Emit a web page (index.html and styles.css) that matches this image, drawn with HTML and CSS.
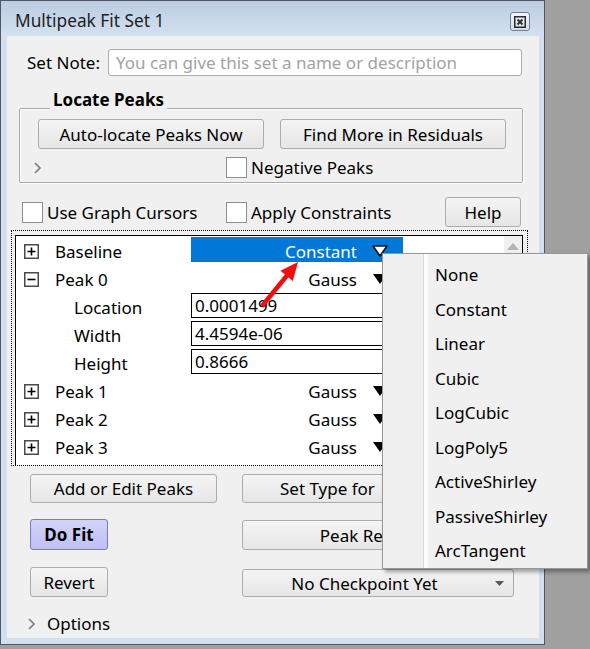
FILE: index.html
```html
<!DOCTYPE html>
<html>
<head>
<meta charset="utf-8">
<title>Multipeak Fit Set 1</title>
<link rel="stylesheet" href="styles.css">
</head>
<body>
<div class="window">
  <div class="titlebar">
    <span class="title">Multipeak Fit Set 1</span>
    <button class="close" aria-label="Close">
      <svg width="12" height="12" viewBox="0 0 12 12"><rect x="0.75" y="0.75" width="10.5" height="10.5" fill="none" stroke="#2a2a2a" stroke-width="1.5"/><path d="M3.5 3.5 L8.5 8.5 M8.5 3.5 L3.5 8.5" stroke="#2a2a2a" stroke-width="1.8"/></svg>
    </button>
  </div>
  <div class="content">
    <div class="note-row">
      <span class="note-label">Set Note:</span>
      <div class="note-input">You can give this set a name or description</div>
    </div>

    <div class="group">
      <div class="group-title">Locate Peaks</div>
      <div class="group-buttons">
        <button class="btn btn-locate">Auto-locate Peaks Now</button>
        <button class="btn btn-locate">Find More in Residuals</button>
      </div>
      <div class="group-row2">
        <svg class="chev" width="9" height="12" viewBox="0 0 9 12"><polyline points="2,1 7,6 2,11" fill="none" stroke="#7a7a7a" stroke-width="1.6"/></svg>
        <span class="check neg"><span class="box"></span>Negative Peaks</span>
      </div>
    </div>

    <div class="opts-row">
      <span class="check first"><span class="box"></span>Use Graph Cursors</span>
      <span class="check"><span class="box"></span>Apply Constraints</span>
      <button class="btn help">Help</button>
    </div>

    <div class="tree-focus">
      <div class="tree">
        <div class="tree-rows">
          <div class="row">
            <div class="name"><svg class="tog" width="15" height="15" viewBox="0 0 15 15"><rect x="0.75" y="0.75" width="13.5" height="13.5" fill="#fff" stroke="#4a4a4a" stroke-width="1.5"/><path d="M3.5 7.5 H11.5 M7.5 3.5 V11.5" stroke="#000" stroke-width="1.6"/></svg>Baseline</div>
            <div class="val sel">Constant<svg class="tri" width="16" height="12" viewBox="0 0 16 12"><polygon points="1,1 15,1 8,11" fill="#fff" stroke="#111" stroke-width="1.6" stroke-linejoin="round"/></svg></div>
          </div>
          <div class="row">
            <div class="name"><svg class="tog" width="15" height="15" viewBox="0 0 15 15"><rect x="0.75" y="0.75" width="13.5" height="13.5" fill="#fff" stroke="#4a4a4a" stroke-width="1.5"/><path d="M3.5 7.5 H11.5" stroke="#000" stroke-width="1.6"/></svg>Peak 0</div>
            <div class="val">Gauss<svg class="tri" width="16" height="12" viewBox="0 0 16 12"><polygon points="1,1 15,1 8,11" fill="#000"/></svg></div>
          </div>
          <div class="row child">
            <div class="name">Location</div>
            <div class="field">0.0001499</div>
          </div>
          <div class="row child">
            <div class="name">Width</div>
            <div class="field">4.4594e-06</div>
          </div>
          <div class="row child">
            <div class="name">Height</div>
            <div class="field">0.8666</div>
          </div>
          <div class="row">
            <div class="name"><svg class="tog" width="15" height="15" viewBox="0 0 15 15"><rect x="0.75" y="0.75" width="13.5" height="13.5" fill="#fff" stroke="#4a4a4a" stroke-width="1.5"/><path d="M3.5 7.5 H11.5 M7.5 3.5 V11.5" stroke="#000" stroke-width="1.6"/></svg>Peak 1</div>
            <div class="val">Gauss<svg class="tri" width="16" height="12" viewBox="0 0 16 12"><polygon points="1,1 15,1 8,11" fill="#000"/></svg></div>
          </div>
          <div class="row">
            <div class="name"><svg class="tog" width="15" height="15" viewBox="0 0 15 15"><rect x="0.75" y="0.75" width="13.5" height="13.5" fill="#fff" stroke="#4a4a4a" stroke-width="1.5"/><path d="M3.5 7.5 H11.5 M7.5 3.5 V11.5" stroke="#000" stroke-width="1.6"/></svg>Peak 2</div>
            <div class="val">Gauss<svg class="tri" width="16" height="12" viewBox="0 0 16 12"><polygon points="1,1 15,1 8,11" fill="#000"/></svg></div>
          </div>
          <div class="row">
            <div class="name"><svg class="tog" width="15" height="15" viewBox="0 0 15 15"><rect x="0.75" y="0.75" width="13.5" height="13.5" fill="#fff" stroke="#4a4a4a" stroke-width="1.5"/><path d="M3.5 7.5 H11.5 M7.5 3.5 V11.5" stroke="#000" stroke-width="1.6"/></svg>Peak 3</div>
            <div class="val">Gauss<svg class="tri" width="16" height="12" viewBox="0 0 16 12"><polygon points="1,1 15,1 8,11" fill="#000"/></svg></div>
          </div>
        </div>
        <div class="scrollbar">
          <svg width="12" height="7" viewBox="0 0 12 7"><polygon points="0,7 6,0 12,7" fill="#b4b4b4"/></svg>
        </div>
      </div>
    </div>

    <div class="actions">
      <button class="btn">Add or Edit Peaks</button>
      <button class="btn settype">Set Type for</button>
      <button class="btn small dofit">Do Fit</button>
      <button class="btn end results">Peak Results</button>
      <button class="btn small end">Revert</button>
      <button class="btn popup"><span class="popup-text">No Checkpoint Yet</span><svg width="9" height="5" viewBox="0 0 9 5"><polygon points="0,0 9,0 4.5,5" fill="#5a5a5a"/></svg></button>
    </div>

    <div class="options-row">
      <svg class="chev" width="9" height="12" viewBox="0 0 9 12"><polyline points="2,1 7,6 2,11" fill="none" stroke="#7a7a7a" stroke-width="1.6"/></svg>
      <span>Options</span>
    </div>
  </div>
</div>

<svg class="arrow" width="55" height="60" viewBox="0 0 55 60">
  <line x1="12" y1="51" x2="37" y2="20.5" stroke="#f20d0d" stroke-width="4.5"/>
  <polygon points="48,7 42.8,26 30.4,15.8" fill="#f20d0d"/>
</svg>

<div class="menu">
  <div class="menu-item">None</div>
  <div class="menu-item">Constant</div>
  <div class="menu-item">Linear</div>
  <div class="menu-item">Cubic</div>
  <div class="menu-item">LogCubic</div>
  <div class="menu-item">LogPoly5</div>
  <div class="menu-item">ActiveShirley</div>
  <div class="menu-item">PassiveShirley</div>
  <div class="menu-item">ArcTangent</div>
</div>
</body>
</html>
```

FILE: styles.css
```css
* { box-sizing: border-box; }

html, body { margin: 0; padding: 0; }

body {
  position: relative;
  width: 590px;
  height: 649px;
  overflow: hidden;
  background: #a0a0a0;
  font-family: "Noto Sans", "Open Sans", sans-serif;
  font-size: 17px;
  color: #000;
}

.window {
  width: 545px;
  height: 645px;
  border: 1px solid #4e5866;
  background: #d2dfee;
  display: flex;
  flex-direction: column;
}

.titlebar {
  flex: none;
  height: 35px;
  display: flex;
  align-items: flex-start;
  justify-content: space-between;
  padding: 10px 14px 0 14px;
  background: linear-gradient(#bccde2, #d3e0ef);
}

.title {
  font-size: 17.3px;
  line-height: 20px;
  color: #1e1e1e;
}

.close {
  width: 20px;
  height: 19px;
  margin-top: 1px;
  padding: 0;
  border: 1px solid #6f7f99;
  border-radius: 3px;
  background: linear-gradient(#f3f6fb, #d5dfec);
  display: flex;
  align-items: center;
  justify-content: center;
}

.content {
  flex: 1;
  margin: 0 5px 6px 6px;
  background: #f0f0f0;
  display: flex;
  flex-direction: column;
}

/* Set note */
.note-row {
  display: flex;
  align-items: center;
  height: 27px;
  margin: 13px 0 0 20px;
}

.note-label { width: 81px; line-height: 27px; }

.note-input {
  width: 414px;
  height: 27px;
  border: 1px solid #abadb3;
  border-radius: 3px;
  background: #fff;
  color: #a3a3a3;
  padding-left: 7px;
  line-height: 25px;
  white-space: nowrap;
}

/* Group box */
.group {
  width: 504px;
  height: 75px;
  margin: 32px 0 0 12px;
  border: 1px solid #aaaaaa;
  border-radius: 2px;
  box-shadow: inset 1px 1px 0 #ffffff, 1px 1px 0 #ffffff;
}

.group-title {
  width: max-content;
  margin: -19px 0 0 30px;
  padding: 0 3px;
  background: #f0f0f0;
  font-weight: 700;
  line-height: 20px;
}

.group-buttons {
  display: flex;
  gap: 16px;
  margin: 9px 0 0 18px;
}

.btn-locate { width: 226px; height: 30px; }

.group-row2 {
  display: flex;
  align-items: center;
  height: 21px;
  margin: 8px 0 0 13px;
}

.neg { margin-left: 184px; }

/* Buttons */
.btn {
  font-family: inherit;
  font-size: 17px;
  color: #000;
  border: 1px solid #acacac;
  border-radius: 3px;
  background: linear-gradient(#f4f4f4, #e6e6e6);
  padding: 0;
  display: flex;
  align-items: center;
  justify-content: center;
  white-space: nowrap;
  overflow: hidden;
}

.help { width: 76px; height: 30px; margin-left: auto; }

.dofit {
  font-weight: 700;
  background: linear-gradient(#d4d4fb, #bfbff4);
  border-color: #7878d8;
}

.settype { justify-content: flex-start; padding-left: 37px; }
.results { padding-right: 16px; }

/* Checkboxes */
.check {
  display: flex;
  align-items: center;
  white-space: nowrap;
}

.box {
  width: 21px;
  height: 21px;
  border: 1px solid #8e8f8f;
  background: #fff;
  margin-right: 4px;
  flex: none;
}

.opts-row {
  display: flex;
  align-items: center;
  height: 30px;
  margin: 14px 18px 0 15px;
}

.check.first { width: 204px; }

/* Tree */
.tree-focus {
  width: 517px;
  margin: 3px 0 0 4px;
  border: 1px dotted #000;
  padding: 4px 4px 0 3px;
}

.tree {
  height: 230px;
  border: 1px solid #000;
  border-bottom: none;
  background: #fff;
  display: flex;
}

.tree-rows { flex: 1; padding-top: 1px; }

.row {
  display: grid;
  grid-template-columns: 175px 212px;
  height: 28px;
}

.name {
  display: flex;
  align-items: center;
  white-space: nowrap;
}

.tog { margin: 0 16px 0 8px; flex: none; }

.child .name { padding-left: 58px; }

.val {
  display: flex;
  align-items: center;
  justify-content: flex-end;
  gap: 15px;
  padding-right: 15px;
}

.val.sel {
  background: linear-gradient(#0078d7, #0078d7) top left / 100% 25px no-repeat;
  color: #fff;
}

.tri { flex: none; }

.field {
  align-self: start;
  height: 25px;
  border: 1px solid #000;
  padding-left: 3px;
  line-height: 23px;
  background: #fff;
}

.scrollbar {
  width: 18px;
  background: #f0f0f0;
  display: flex;
  justify-content: center;
  align-items: flex-start;
  padding-top: 7px;
}

/* Action buttons */
.actions {
  display: grid;
  grid-template-columns: 187px 272px;
  grid-template-rows: 29px 31px 31px;
  column-gap: 25px;
  row-gap: 16px;
  margin: 8px 0 0 23px;
}

.btn.small { width: 78px; }
.btn.end { height: 30px; align-self: end; }

.popup { height: 28px; align-self: end; padding-right: 9px; }
.popup-text { flex: 1; text-align: center; padding-right: 9px; }

.options-row {
  display: flex;
  align-items: center;
  gap: 11px;
  height: 25px;
  margin: 14px 0 0 20px;
}

.chev { flex: none; }

/* Overlays */
.arrow {
  position: absolute;
  left: 250px;
  top: 255px;
}

.menu {
  position: absolute;
  left: 382px;
  top: 253px;
  width: 206px;
  height: 316px;
  border: 1px solid #979797;
  padding: 4px 2px 0 2px;
  background-color: #f0f0f0;
  background-image: linear-gradient(to right, transparent 40px, #dadada 40px, #dadada 41px, #fbfbfb 41px, #fbfbfb 45px, transparent 45px);
  box-shadow: 3px 3px 4px rgba(0, 0, 0, 0.35);
}

.menu-item {
  height: 34.5px;
  line-height: 34.5px;
  padding-left: 50px;
  white-space: nowrap;
}
```
